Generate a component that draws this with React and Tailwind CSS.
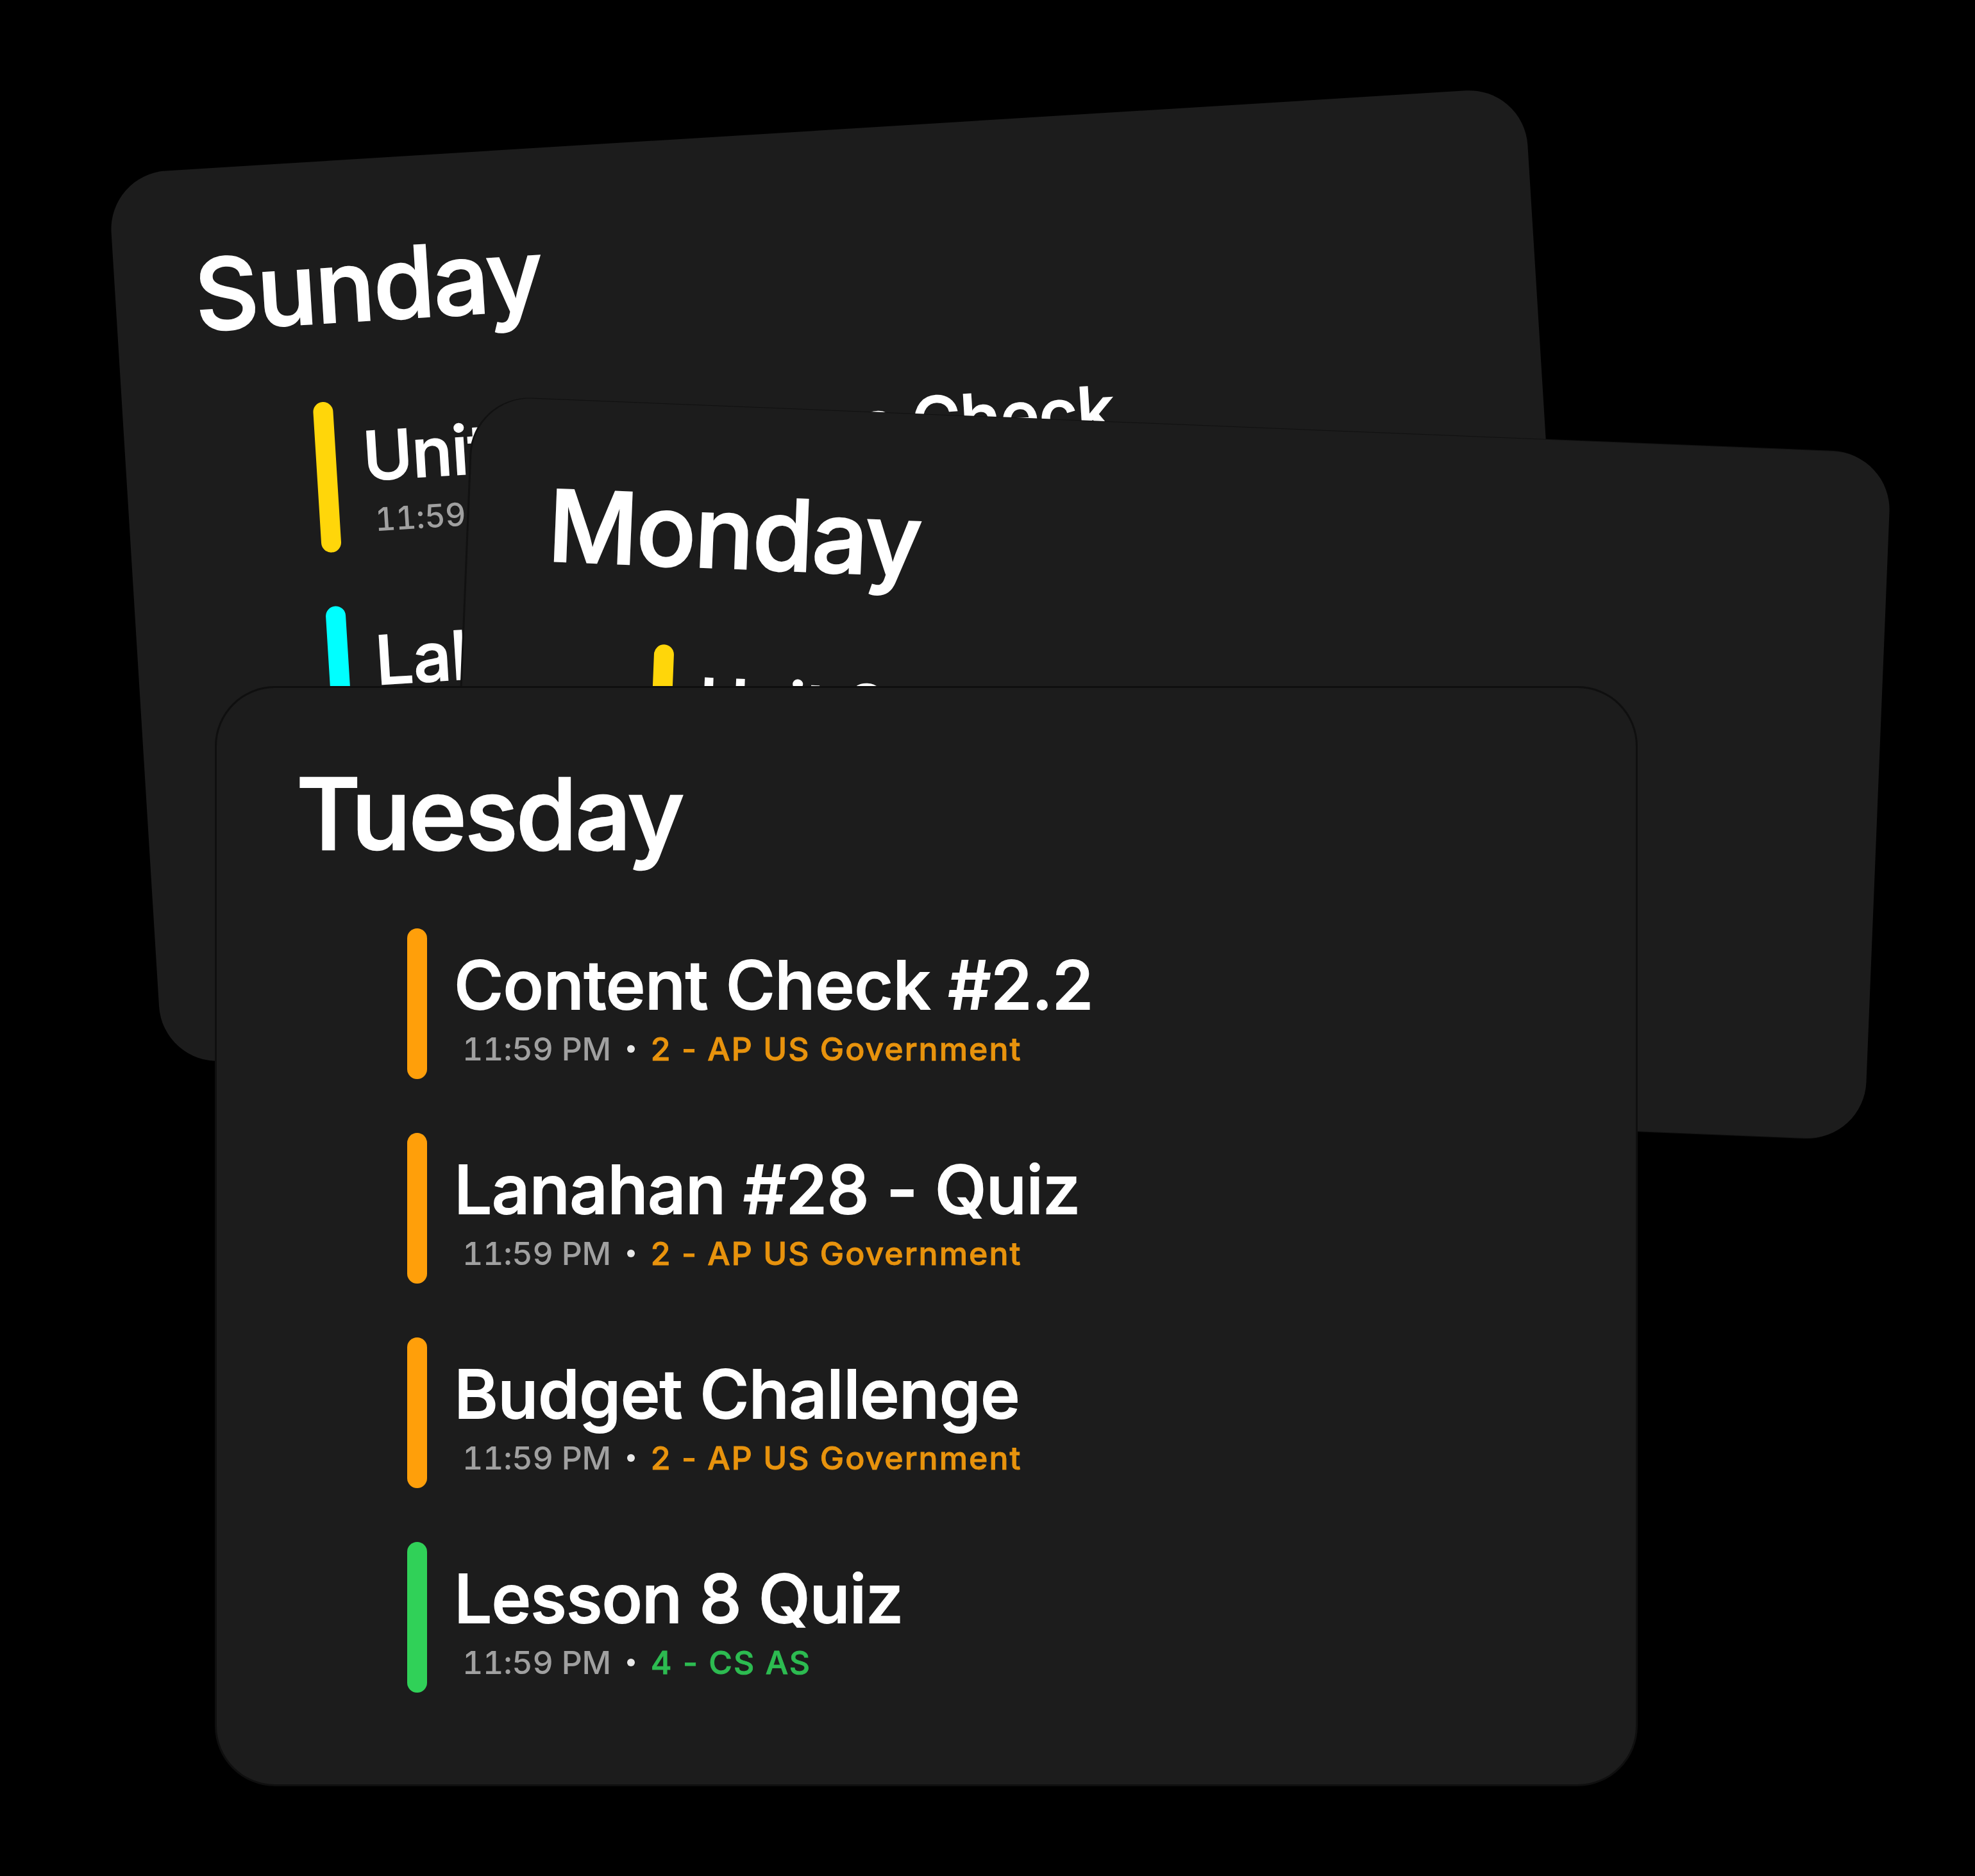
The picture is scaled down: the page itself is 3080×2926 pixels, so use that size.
const SUNDAY = [
  { title: "Unit 3 - Progress Check", tracking: "tracking-[-1.1px]", course: "1 - AP Chemistry", bar: "bg-[#ffd60a]", text: "text-[#e4bf0c]" },
  { title: "Lab Report", course: "3 - Physics", bar: "bg-[#00ffff]", text: "text-[#03e4e4]" },
  { title: "Unit 3 Notes", course: "1 - AP Chemistry", bar: "bg-[#ffd60a]", text: "text-[#e4bf0c]" },
];

const MONDAY = [
  { title: "Unit 3 - Concept Quiz", course: "1 - AP Chemistry", bar: "bg-[#ffd60a]", text: "text-[#e4bf0c]" },
  { title: "Reading", course: "2 - AP US Government", bar: "bg-[#ff9f0a]", text: "text-[#e8930d]" },
];

const TUESDAY = [
  { title: "Content Check #2.2", tracking: "tracking-[-0.4px]", course: "2 - AP US Government", bar: "bg-[#ff9f0a]", text: "text-[#e8930d]" },
  { title: "Lanahan #28 - Quiz", course: "2 - AP US Government", bar: "bg-[#ff9f0a]", text: "text-[#e8930d]" },
  { title: "Budget Challenge", course: "2 - AP US Government", bar: "bg-[#ff9f0a]", text: "text-[#e8930d]" },
  { title: "Lesson 8 Quiz", tracking: "tracking-[-0.9px]", course: "4 - CS AS", bar: "bg-[#30d158]", text: "text-[#2dbb51]" },
];

function Assignment({ item }) {
  return (
    <li className="flex h-[235px] gap-[42px]">
      <span className={`h-full w-[31px] shrink-0 rounded-full ${item.bar}`} />
      <div className="pt-[28px] whitespace-nowrap">
        <p
          className={`text-[105px] leading-[120px] font-medium text-white [-webkit-text-stroke:1.8px_white] ${item.tracking ?? "tracking-[-0.6px]"}`}
        >
          {item.title}
        </p>
        <p className="ml-[13px] flex items-center pt-[10px] text-[50px] leading-[60px]">
          <span className="font-medium tracking-[-0.3px] tabular-nums text-[#a0a0a0]">11:59 PM</span>
          <span className="mr-[25px] ml-[25px] size-[12px] rounded-full bg-[#e8e8e8]" />
          <span className={`font-medium tracking-[2px] [-webkit-text-stroke:0.9px_currentColor] ${item.text}`}>
            {item.course}
          </span>
        </p>
      </div>
    </li>
  );
}

function DayCard({ day, tracking, items, place }) {
  return (
    <section
      className={`absolute w-[2213px] rounded-[91px] bg-[#1c1c1c] px-[124px] pt-[106px] pb-[143px] ${place}`}
    >
      <h2
        className={`text-[154px] leading-[180px] font-medium text-white [-webkit-text-stroke:2.6px_white] ${tracking}`}
      >
        {day}
      </h2>
      <ul className="mt-[89px] ml-[173px] flex flex-col gap-[84px]">
        {items.map((item) => (
          <Assignment key={item.title} item={item} />
        ))}
      </ul>
    </section>
  );
}

export default function App() {
  return (
    <main className="relative h-[2926px] w-[3080px] overflow-hidden bg-black font-['Inter',sans-serif]">
      <DayCard
        day="Sunday"
        tracking="tracking-[-2px]"
        items={SUNDAY}
        place="top-[272px] left-[168px] origin-top-left -rotate-[3.53deg]"
      />
      <DayCard
        day="Monday"
        tracking="tracking-[-2.3px]"
        items={MONDAY}
        place="top-[618px] left-[739px] origin-top-left rotate-[2.32deg] shadow-[-2px_0_0_1px_#111111]"
      />
      <DayCard
        day="Tuesday"
        tracking="tracking-[-3.1px]"
        items={TUESDAY}
        place="top-[1073px] left-[338px] shadow-[0_0_0_3px_#0f0f0f]"
      />
    </main>
  );
}
